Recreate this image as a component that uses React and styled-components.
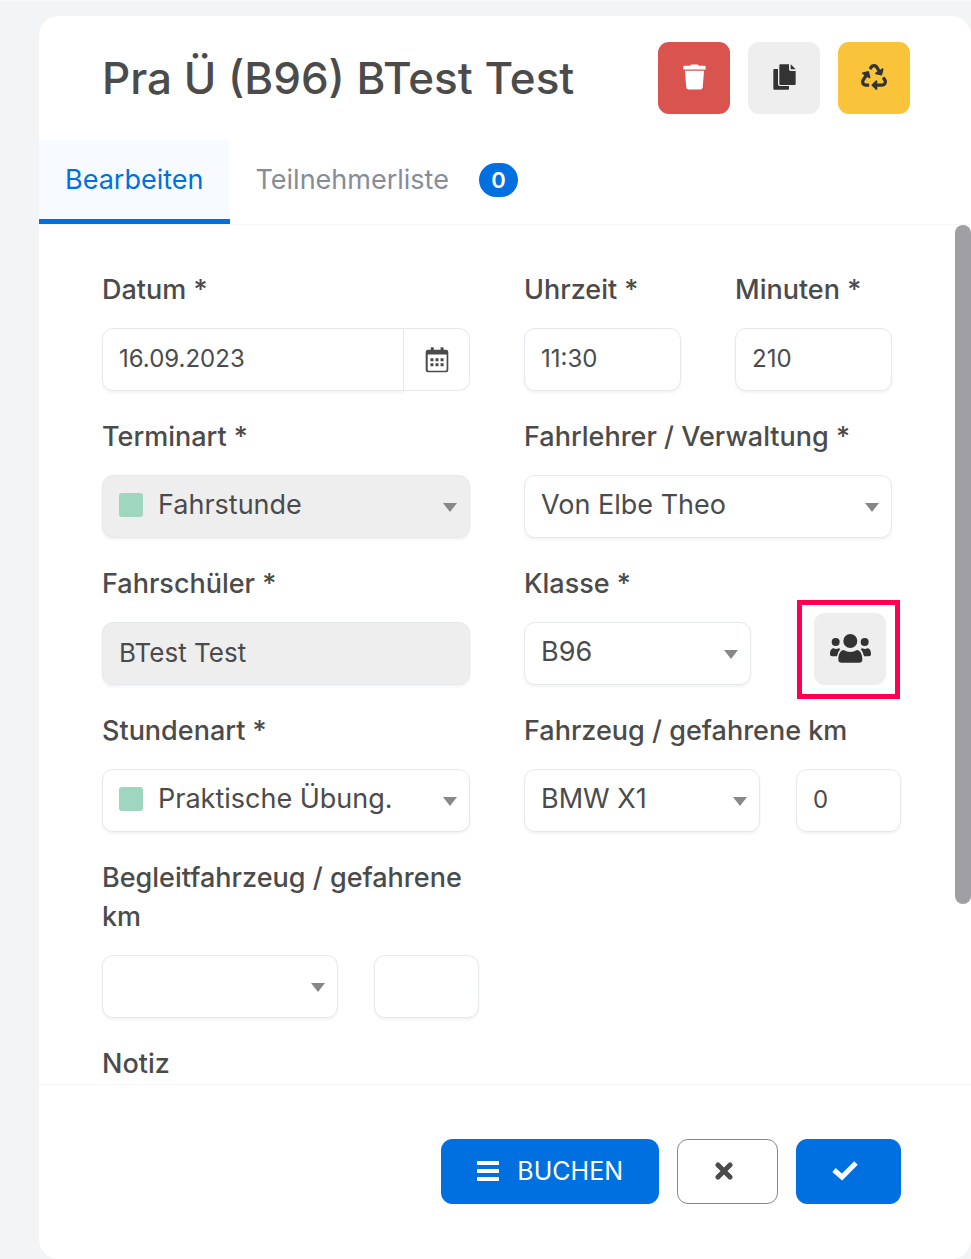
// Dependencies
import React, { useState } from 'react';
import styled, { createGlobalStyle } from 'styled-components';
import { FaRecycle } from 'react-icons/fa';

const App = () => {
	const [tab, setTab] = useState('edit');

	return (
		<Page>
			<GlobalStyle />
			<Card>
				<Header>
					<Title>Pra Ü (B96) BTest Test</Title>
					<HeaderActions>
						<IconButton $bg="#d9534f" $color="#fff" aria-label="Löschen">
							<TrashIcon />
						</IconButton>
						<IconButton aria-label="Kopieren">
							<CopyIcon />
						</IconButton>
						<IconButton $bg="#f9c43a" aria-label="Wiederholen">
							<FaRecycle size={26} />
						</IconButton>
					</HeaderActions>
				</Header>

				<Tabs role="tablist">
					<Tab
						role="tab"
						aria-selected={tab === 'edit'}
						$active={tab === 'edit'}
						onClick={() => setTab('edit')}
					>
						Bearbeiten
					</Tab>
					<Tab
						role="tab"
						aria-selected={tab === 'list'}
						$active={tab === 'list'}
						onClick={() => setTab('list')}
					>
						Teilnehmerliste
						<Badge>0</Badge>
					</Tab>
				</Tabs>

				<Body>
					<Form>
						<Field>
							<Label htmlFor="datum">Datum *</Label>
							<InputGroup>
								<DateInput id="datum" defaultValue="16.09.2023" $numeric />
								<CalendarButton type="button" aria-label="Kalender">
									<CalendarIcon />
								</CalendarButton>
							</InputGroup>
						</Field>
						<Split>
							<Field>
								<Label htmlFor="uhrzeit">Uhrzeit *</Label>
								<Input id="uhrzeit" defaultValue="11:30" $numeric />
							</Field>
							<Field>
								<Label htmlFor="minuten">Minuten *</Label>
								<Input id="minuten" defaultValue="210" $numeric />
							</Field>
						</Split>

						<Field>
							<Label htmlFor="terminart">Terminart *</Label>
							<SelectBox id="terminart" value="Fahrstunde" swatch disabled />
						</Field>
						<Field>
							<Label htmlFor="fahrlehrer">Fahrlehrer / Verwaltung *</Label>
							<SelectBox id="fahrlehrer" value="Von Elbe Theo" />
						</Field>

						<Field>
							<Label htmlFor="schueler">Fahrschüler *</Label>
							<Input id="schueler" defaultValue="BTest Test" disabled />
						</Field>
						<Field>
							<Label htmlFor="klasse">Klasse *</Label>
							<ClassRow>
								<SelectBox id="klasse" value="B96" />
								<Highlight>
									<IconButton type="button" aria-label="Teilnehmer">
										<GroupIcon />
									</IconButton>
								</Highlight>
							</ClassRow>
						</Field>

						<Field>
							<Label htmlFor="stundenart">Stundenart *</Label>
							<SelectBox id="stundenart" value="Praktische Übung." swatch />
						</Field>
						<Field>
							<Label htmlFor="fahrzeug">Fahrzeug / gefahrene km</Label>
							<VehicleRow>
								<SelectBox id="fahrzeug" value="BMW X1" />
								<Input aria-label="gefahrene km" defaultValue="0" $numeric />
							</VehicleRow>
						</Field>

						<Field>
							<Label htmlFor="begleit">Begleitfahrzeug / gefahrene km</Label>
							<VehicleRow>
								<SelectBox id="begleit" value="" />
								<Input aria-label="Begleitfahrzeug gefahrene km" $numeric />
							</VehicleRow>
						</Field>

						<NoteHeading>Notiz</NoteHeading>
					</Form>
					<ScrollTrack>
						<ScrollThumb />
					</ScrollTrack>
				</Body>

				<Footer>
					<FooterButton $primary>
						<MenuIcon />
						BUCHEN
					</FooterButton>
					<IconFooterButton aria-label="Abbrechen">
						<CloseIcon />
					</IconFooterButton>
					<IconFooterButton $primary aria-label="Speichern">
						<CheckIcon />
					</IconFooterButton>
				</Footer>
			</Card>
		</Page>
	);
};

export default App;

const SelectBox = ({ id, value, swatch, disabled }) => (
	<SelectWrap>
		{swatch && <Swatch />}
		<Select id={id} defaultValue={value} disabled={disabled} $swatch={swatch}>
			<option value={value}>{value}</option>
		</Select>
		<Arrow viewBox="0 0 14 9" aria-hidden="true">
			<path d="M0 0h14L7 9z" />
		</Arrow>
	</SelectWrap>
);

// Icons
const TrashIcon = () => (
	<svg width="23" height="26" viewBox="126 132 70 78" fill="currentColor">
		<path d="M127 140q0-3 3-3h17l4-4h20l4 4h17q3 0 3 3v8H127z" />
		<path d="M132 152h58l-4 51q-1 6-7 6h-36q-6 0-7-6z" />
	</svg>
);

const CopyIcon = () => (
	<svg width="23" height="26" viewBox="397 132 69 78" fill="currentColor">
		<path d="M398 150q0-3 3-3h11v46q0 5 5 5h28v8q0 3-3 3h-41q-3 0-3-3z" />
		<path d="M416 136q0-3 3-3h26v15q0 5 5 5h15v39q0 3-3 3h-43q-3 0-3-3z" />
		<path d="M450 133l15 15h-13q-2 0-2-2z" />
	</svg>
);

const CalendarIcon = () => (
	<svg width="24" height="26" viewBox="1004 259 71 77" fill="currentColor">
		<path
			fillRule="evenodd"
			d="M1021 262q0-2 2-2h5q2 0 2 2v5h20v-5q0-2 2-2h5q2 0 2 2v5h7q7 0 7 7v53q0 7-7 7h-53q-7 0-7-7v-53q0-7 7-7h8zM1012 281v45q0 3 3 3h50q3 0 3-3v-45z"
		/>
		<path d="M1020 292h9v9h-9zm15 0h9v9h-9zm15 0h9v9h-9zm-30 15h9v9h-9zm15 0h9v9h-9zm15 0h9v9h-9z" />
	</svg>
);

const GroupIcon = () => (
	<svg width="43" height="31" viewBox="956 218 129 93" fill="currentColor">
		<circle cx="1020" cy="242" r="21" />
		<circle cx="976" cy="245" r="12" />
		<circle cx="1063" cy="245" r="12" />
		<path d="M984 298c0-18 7-28 16-29q20 12 40 0c9 1 16 11 16 29q0 9-10 9h-52q-10 0-10-9z" />
		<path d="M959 282c0-11 4-18 11-18q7 4 15 0l5 2q-8 9-10 22h-15q-6 0-6-6z" />
		<path d="M1082 282c0-11-4-18-11-18q-7 4-15 0l-5 2q8 9 10 22h15q6 0 6-6z" />
	</svg>
);

const MenuIcon = () => (
	<svg width="22" height="20" viewBox="0 0 22 20" fill="currentColor">
		<path d="M0 0h22v4H0zM0 8h22v4H0zM0 16h22v4H0z" />
	</svg>
);

const CloseIcon = () => (
	<svg width="22" height="18" viewBox="0 0 22 18" stroke="currentColor">
		<path d="M5 3l12 12M17 3L5 15" strokeWidth="5" strokeLinecap="round" />
	</svg>
);

const CheckIcon = () => (
	<svg width="26" height="20" viewBox="0 0 26 20" fill="none" stroke="currentColor">
		<path d="M2 9l8 7L24 2" strokeWidth="5" />
	</svg>
);

// Styled-components
const GlobalStyle = createGlobalStyle`
	* {
		box-sizing: border-box;
	}
	body {
		margin: 0;
		background: #f3f4f6;
		color: #4b4b4b;
		font-family: Inter, 'Liberation Sans', sans-serif;
		font-size: 27px;
	}
	button, input, select {
		font: inherit;
		color: inherit;
		margin: 0;
	}
	button {
		cursor: pointer;
	}
	svg {
		display: block;
	}
`;

const Page = styled.div`
	border-top: 1px solid #f8f9fa;
	padding: 15px 0 0 39px;
	min-height: 100vh;
	display: flex;
`;

const Card = styled.main`
	flex: 1;
	min-width: 0;
	display: flex;
	flex-direction: column;
	background: #fff;
	border-radius: 20px;
`;

const Header = styled.header`
	display: flex;
	justify-content: space-between;
	align-items: center;
	padding: 26px 61px 26px 63px;
`;

const Title = styled.h1`
	margin: 0;
	font-size: 44px;
	font-weight: 500;
	line-height: 72px;
`;

const HeaderActions = styled.div`
	display: flex;
	gap: 18px;
`;

const IconButton = styled.button`
	display: flex;
	align-items: center;
	justify-content: center;
	width: 72px;
	height: 72px;
	padding: 0 0 2px;
	border: none;
	border-radius: 11px;
	background: ${props => props.$bg || '#eee'};
	color: ${props => props.$color || '#333'};
`;

const Tabs = styled.div`
	display: flex;
	border-bottom: 1px solid #f5f6f7;
`;

const Tab = styled.button`
	display: flex;
	align-items: center;
	gap: 30px;
	height: 84px;
	padding: 0 26px;
	border: none;
	border-bottom: 5px solid ${props => (props.$active ? '#0070e0' : 'transparent')};
	background: ${props => (props.$active ? '#f7faff' : 'none')};
	color: ${props => (props.$active ? '#0070e0' : '#868c98')};
`;

const Badge = styled.span`
	width: 39px;
	border-radius: 17px;
	background: #0070e0;
	color: #fff;
	font-size: 22px;
	font-weight: 600;
	line-height: 34px;
	text-align: center;
`;

const Body = styled.div`
	flex: 1;
	display: flex;
`;

const Form = styled.form`
	flex: 1;
	min-width: 0;
	display: grid;
	grid-template-columns: 1fr 1fr;
	gap: 26px 54px;
	align-content: start;
	padding: 45px 63px 0;
`;

const Field = styled.div`
	min-width: 0;
	display: flex;
	flex-direction: column;
	gap: 19px;
`;

const Split = styled.div`
	display: grid;
	grid-template-columns: 1fr 1fr;
	gap: 54px;
`;

const Label = styled.label`
	font-weight: 500;
	line-height: 39px;
`;

const NoteHeading = styled.div`
	grid-column: 1 / -1;
	font-weight: 500;
	line-height: 39px;
`;

const Input = styled.input`
	width: 100%;
	min-width: 0;
	height: 63px;
	padding: 0 16px 2px;
	border: 1px solid #e6e9ec;
	border-radius: 11px;
	background: #fff;
	box-shadow: 0 2px 3px rgba(0, 0, 0, 0.05);
	font-size: ${props => (props.$numeric ? '24px' : '26px')};
	outline: none;

	&:disabled {
		background: #eee;
	}
`;

const InputGroup = styled.div`
	display: flex;
`;

const DateInput = styled(Input)`
	flex: 1;
	border-radius: 11px 0 0 11px;
`;

const CalendarButton = styled.button`
	display: flex;
	align-items: center;
	justify-content: center;
	width: 66px;
	border: 1px solid #e6e9ec;
	border-left: none;
	border-radius: 0 11px 11px 0;
	background: #fff;
`;

const SelectWrap = styled.div`
	position: relative;
	flex: 1;
	min-width: 0;
`;

const Select = styled.select`
	display: block;
	width: 100%;
	height: 63px;
	padding: 0 40px 4px ${props => (props.$swatch ? '55px' : '16px')};
	border: 1px solid #e6e9ec;
	border-radius: 11px;
	background: #fff;
	box-shadow: 0 2px 3px rgba(0, 0, 0, 0.05);
	appearance: none;
	outline: none;

	&:disabled {
		background: #eee;
		opacity: 1;
	}
`;

const Swatch = styled.span`
	position: absolute;
	top: 18px;
	left: 17px;
	width: 24px;
	height: 24px;
	border-radius: 3px;
	background: #9fd6bf;
`;

const Arrow = styled.svg`
	position: absolute;
	top: 28px;
	right: 13px;
	width: 14px;
	height: 9px;
	fill: #888;
	pointer-events: none;
`;

// the button is taller than the row and grows out of its top
const ClassRow = styled.div`
	display: flex;
	align-items: flex-end;
	gap: 63px;
	height: 63px;
	padding-right: 6px;
`;

const Highlight = styled.div`
	position: relative;

	&::after {
		content: '';
		position: absolute;
		inset: -13px -14px -14px -17px;
		border: 5px solid #ff0050;
		pointer-events: none;
	}
`;

// slightly wider than its column, the km box hangs over the edge
const VehicleRow = styled.div`
	display: grid;
	grid-template-columns: 1fr 105px;
	gap: 36px;
	margin-right: -9px;
`;

const ScrollTrack = styled.div`
	flex: none;
	width: 16px;
`;

const ScrollThumb = styled.div`
	height: 79%;
	border-radius: 8px;
	background: #a09fa4;
`;

const Footer = styled.footer`
	display: flex;
	justify-content: flex-end;
	gap: 18px;
	padding: 54px 70px 55px;
	border-top: 1px solid #f5f6f7;
`;

const FooterButton = styled.button`
	display: flex;
	align-items: center;
	gap: 18px;
	height: 65px;
	padding: 0 35px 2px;
	border: 1px solid ${props => (props.$primary ? '#0070e0' : '#888')};
	border-radius: 11px;
	background: ${props => (props.$primary ? '#0070e0' : '#fff')};
	color: ${props => (props.$primary ? '#fff' : '#4b4b4b')};
	font-size: 25px;
`;

const IconFooterButton = styled(FooterButton)`
	padding: 0 42px 2px 35px;
`;
